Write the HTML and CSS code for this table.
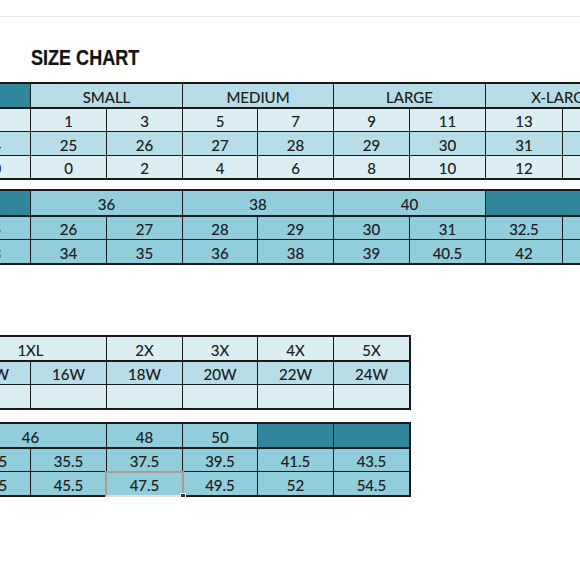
FILE: index.html
```html
<!DOCTYPE html>
<html lang="en">
<head>
<meta charset="utf-8">
<title>Size Chart</title>
<link rel="stylesheet" href="styles.css">
</head>
<body>
<div class="topbar"></div>
<h1 class="title"><span>SIZE CHART</span></h1>
<div class="sheet">
  <div class="grid wide t1">
    <div class="c dark hd"></div>
    <div class="c mid hd s2">SMALL</div>
    <div class="c mid hd s2">MEDIUM</div>
    <div class="c mid hd s2">LARGE</div>
    <div class="c mid hd s2">X-LARGE</div>

    <div class="c lt"></div>
    <div class="c lt">1</div><div class="c lt">3</div>
    <div class="c lt">5</div><div class="c lt">7</div>
    <div class="c lt">9</div><div class="c lt">11</div>
    <div class="c lt">13</div><div class="c lt">15</div>

    <div class="c mid">24</div>
    <div class="c mid">25</div><div class="c mid">26</div>
    <div class="c mid">27</div><div class="c mid">28</div>
    <div class="c mid">29</div><div class="c mid">30</div>
    <div class="c mid">31</div><div class="c mid">32</div>

    <div class="c lt">00</div>
    <div class="c lt">0</div><div class="c lt">2</div>
    <div class="c lt">4</div><div class="c lt">6</div>
    <div class="c lt">8</div><div class="c lt">10</div>
    <div class="c lt">12</div><div class="c lt">14</div>
  </div>

  <div class="grid wide t2">
    <div class="c dark hd"></div>
    <div class="c blue hd s2">36</div>
    <div class="c blue hd s2">38</div>
    <div class="c blue hd s2">40</div>
    <div class="c dark hd s2"></div>

    <div class="c blue">25</div>
    <div class="c blue">26</div><div class="c blue">27</div>
    <div class="c blue">28</div><div class="c blue">29</div>
    <div class="c blue">30</div><div class="c blue">31</div>
    <div class="c blue">32.5</div><div class="c blue">33.5</div>

    <div class="c blue">33</div>
    <div class="c blue">34</div><div class="c blue">35</div>
    <div class="c blue">36</div><div class="c blue">38</div>
    <div class="c blue">39</div><div class="c blue">40.5</div>
    <div class="c blue">42</div><div class="c blue">43.5</div>
  </div>

  <div class="grid narrow t3">
    <div class="c lt hd s2">1XL</div>
    <div class="c lt hd">2X</div>
    <div class="c lt hd">3X</div>
    <div class="c lt hd">4X</div>
    <div class="c lt hd">5X</div>

    <div class="c mid">14W</div>
    <div class="c mid">16W</div>
    <div class="c mid">18W</div>
    <div class="c mid">20W</div>
    <div class="c mid">22W</div>
    <div class="c mid">24W</div>

    <div class="c lt"></div>
    <div class="c lt"></div>
    <div class="c lt"></div>
    <div class="c lt"></div>
    <div class="c lt"></div>
    <div class="c lt"></div>
  </div>

  <div class="grid narrow t4">
    <div class="c blue hd s2">46</div>
    <div class="c blue hd">48</div>
    <div class="c blue hd">50</div>
    <div class="c dark hd"></div>
    <div class="c dark hd"></div>

    <div class="c blue">33.5</div>
    <div class="c blue">35.5</div>
    <div class="c blue">37.5</div>
    <div class="c blue">39.5</div>
    <div class="c blue">41.5</div>
    <div class="c blue">43.5</div>

    <div class="c blue">43.5</div>
    <div class="c blue">45.5</div>
    <div class="c blue sel">47.5<span class="selbox"><span class="handle"></span></span></div>
    <div class="c blue">49.5</div>
    <div class="c blue">52</div>
    <div class="c blue">54.5</div>
  </div>
</div>
</body>
</html>
```

FILE: styles.css
```css
html, body {
  margin: 0;
  padding: 0;
  background: #ffffff;
}

body {
  width: 580px;
  height: 580px;
  overflow: hidden;
  font-family: Lato, "Open Sans", "Liberation Sans", sans-serif;
}

.topbar {
  height: 16px;
  border-bottom: 1px solid #ebebeb;
}

.title {
  margin: 30px 0 0 0;
  padding-left: 31px;
  height: 22px;
  font-family: "Liberation Sans", Arial, sans-serif;
  font-weight: bold;
  font-size: 22px;
  line-height: 22px;
  color: #141414;
}

.title span {
  display: inline-block;
  transform: scaleX(0.82);
  transform-origin: left center;
  text-shadow: 0 0 1px rgba(0, 0, 0, 0.35);
}

.sheet {
  margin-top: 13px;
  width: 580px;
  overflow: hidden;
}

.grid {
  display: grid;
  width: max-content;
  margin-left: -47px;
  padding: 2px;
  gap: 1px;
  background: #1a1a1a;
}

.wide {
  grid-template-columns: 75px 75px 75px 74px 75px 75px 75px 76px 75px;
}

.narrow {
  grid-template-columns: 75px 75px 75px 74px 75px 75px;
}

.t1 {
  grid-template-rows: 24px 22px 23px 22px;
}

.t2 {
  margin-top: 9px;
  grid-template-rows: 25px 22px 23px;
}

.t3 {
  margin-top: 70px;
  grid-template-rows: 24px 22px 23px;
}

.t4 {
  margin-top: 12px;
  grid-template-rows: 24px 22px 23px;
}

.c {
  display: flex;
  align-items: center;
  justify-content: center;
  padding-top: 2px;
  box-sizing: border-box;
  font-size: 15px;
  color: #1f1f1f;
  white-space: nowrap;
  overflow: hidden;
  text-shadow: 0 0 0.4px rgba(0, 0, 0, 0.45);
}

.hd {
  margin-bottom: 1px;
}

.s2 {
  grid-column: span 2;
}

.lt { background: #daeef3; }
.mid { background: #b7dee8; }
.blue { background: #92cddc; }
.dark { background: #31869b; }

.sel {
  position: relative;
  overflow: visible;
}

.selbox {
  position: absolute;
  left: -2px;
  top: -1px;
  right: -2px;
  bottom: -2px;
  border: 2px solid #ae9894;
  border-bottom-color: #e4dedd;
}

.handle {
  position: absolute;
  right: -4px;
  bottom: -4px;
  width: 4px;
  height: 4px;
  background: #333333;
  border: 1px solid #ffffff;
}
```
